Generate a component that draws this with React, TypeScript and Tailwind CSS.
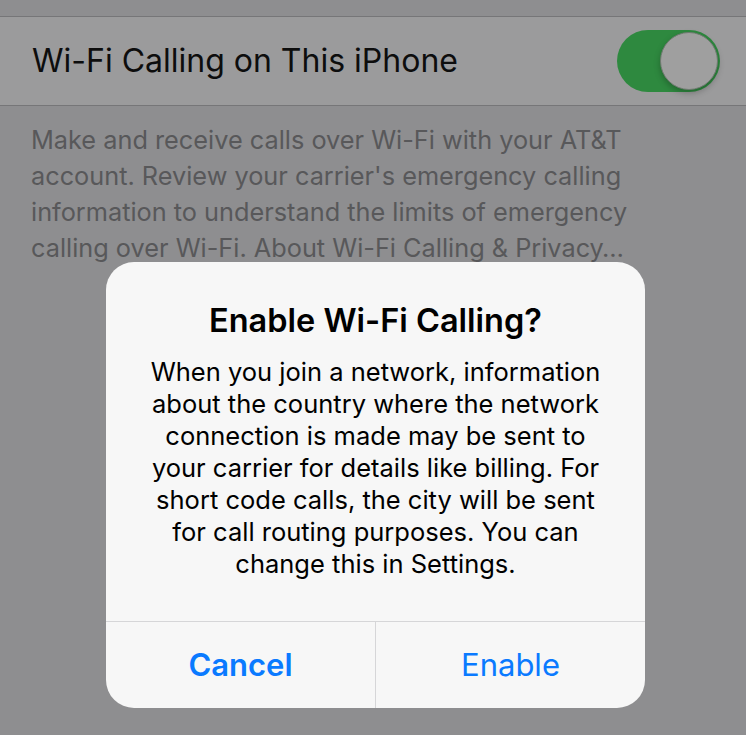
import React from "react";

const font = { fontFamily: "Inter, 'Noto Sans', sans-serif" };

const footer = [
  "Make and receive calls over Wi-Fi with your AT&T",
  "account. Review your carrier's emergency calling",
  "information to understand the limits of emergency",
  "calling over Wi-Fi. About Wi-Fi Calling & Privacy…",
];

const message = [
  "When you join a network, information",
  "about the country where the network",
  "connection is made may be sent to",
  "your carrier for details like billing. For",
  "short code calls, the city will be sent",
  "for call routing purposes. You can",
  "change this in Settings.",
];

function Toggle() {
  return (
    <div className="relative w-[103px] h-[62px] rounded-full bg-[#2e893f]">
      <div className="absolute right-[2px] top-[2px] w-[58px] h-[58px] rounded-full bg-[#9f9f9f] border border-[#6f7a70] shadow-[0_3px_6px_rgba(0,0,0,0.25)]"></div>
    </div>
  );
}

export default function App() {
  return (
    <div
      className="relative w-[746px] h-[735px] overflow-hidden bg-[#8e8e90]"
      style={font}
    >
      <div className="h-[16px]"></div>
      <div className="h-[90px] flex flex-row items-center justify-between pl-[32px] pr-[26px] bg-[#9b9b9c] border-y border-[#767678]">
        <p className="text-[32px] text-[#0d0d0d]">Wi-Fi Calling on This iPhone</p>
        <Toggle />
      </div>
      <div className="pl-[31px] pt-[16px] text-[25.3px] leading-[36px] text-[#58585a] whitespace-nowrap">
        {footer.map((line) => (
          <p key={line}>{line}</p>
        ))}
      </div>

      {/* alert */}
      <div className="absolute left-[106px] top-[262px] w-[539px] h-[446px] rounded-[28px] bg-[#f7f7f7] flex flex-col overflow-hidden">
        <div className="flex flex-col items-center pt-[40px] pb-[41px] gap-[16px] text-center whitespace-nowrap">
          <p className="text-[32.5px] leading-[38px] font-semibold text-black">
            Enable Wi-Fi Calling?
          </p>
          <div className="text-[25.5px] leading-[32px] text-black">
            {message.map((line) => (
              <p key={line}>{line}</p>
            ))}
          </div>
        </div>
        <div className="grow flex flex-row border-t border-[#d6d6d8]">
          <button className="flex-1 flex items-center justify-center text-[31px] font-semibold text-[#0a7aff] border-r border-[#d6d6d8]">
            Cancel
          </button>
          <button className="flex-1 flex items-center justify-center text-[31px] text-[#0a7aff]">
            Enable
          </button>
        </div>
      </div>
    </div>
  );
}
